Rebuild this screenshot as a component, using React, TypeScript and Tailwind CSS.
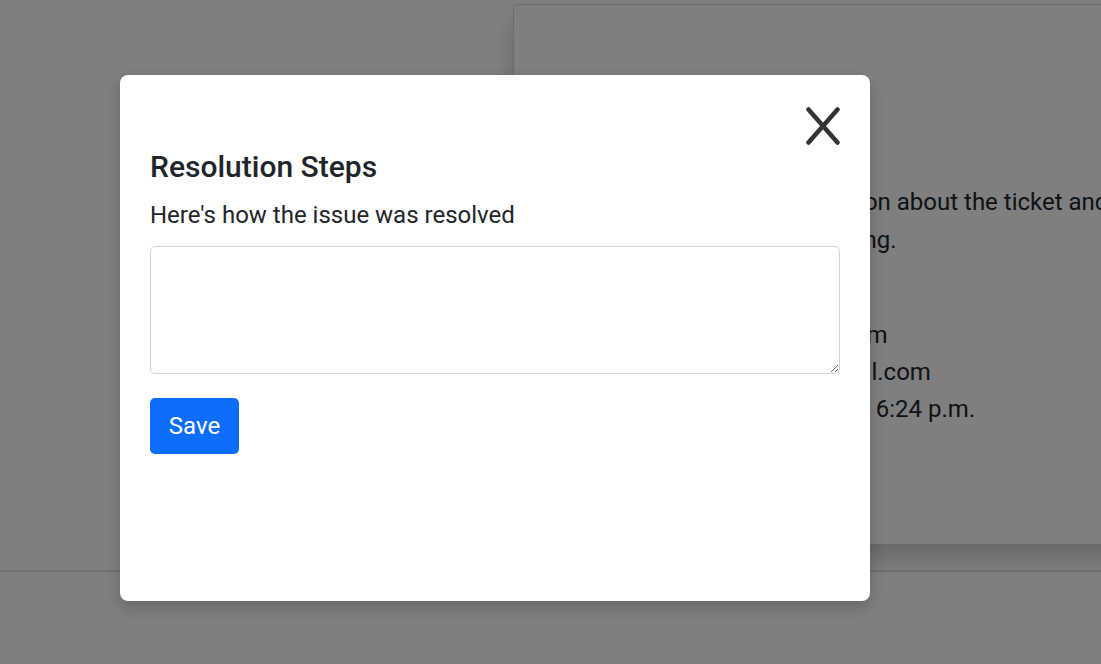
import React from "react";

export default function App() {
  return (
    <div className="relative h-[664px] w-[1101px] overflow-hidden bg-white font-['Roboto',sans-serif] text-[#212529]">
      {/* background page */}
      <div className="h-[572px] border-b-2 border-[#dee2e6] pt-[4px]">
        <div className="ml-[513px] h-[541px] w-[640px] rounded-[6px] border border-[#d6d6d6] bg-white px-[32px] pt-[178px] shadow-[0_14px_22px_rgba(0,0,0,0.18)]">
          <div className="whitespace-nowrap text-[24px] leading-[38px]">
            <div>Here is all of the key information about the ticket and</div>
            <div>everyone involved in its handling.</div>
            <div className="mt-[58px] leading-[37px]">Assigned to: Web Support Team</div>
            <div className="leading-[37px]">Contact E-mail: support@gmail.com</div>
            <div className="leading-[37px]">Created on: October 3, 2024 at 6:24 p.m.</div>
          </div>
        </div>
      </div>

      {/* overlay */}
      <div className="absolute inset-0 bg-black/50" />

      {/* modal */}
      <div className="absolute left-[120px] top-[75px] h-[526px] w-[750px] rounded-[8px] bg-white px-[30px] pt-[32px] shadow-[0_6px_16px_rgba(0,0,0,0.2)]">
        <div className="flex justify-end">
          <button className="flex h-[38px] w-[34px] items-center justify-center">
            <svg width="34" height="38" viewBox="0 0 34 38" fill="none">
              <path d="M2.5 2.5 L31.5 35.5 M31.5 2.5 L2.5 35.5" stroke="#333333" strokeWidth="4.5" strokeLinecap="round" />
            </svg>
          </button>
        </div>
        <h4 className="mt-[4px] text-[30px] font-medium leading-[36px] text-[#212529]">Resolution Steps</h4>
        <p className="mt-[12px] text-[24px] leading-[36px] text-[#212529]">Here's how the issue was resolved</p>
        <textarea className="mt-[13px] block h-[128px] w-[690px] rounded-[5px] border border-[#d0d4d8] bg-white outline-none" />
        <button className="mt-[24px] h-[56px] w-[89px] rounded-[5px] bg-[#0d6efd] text-[24px] text-white">Save</button>
      </div>
    </div>
  );
}
